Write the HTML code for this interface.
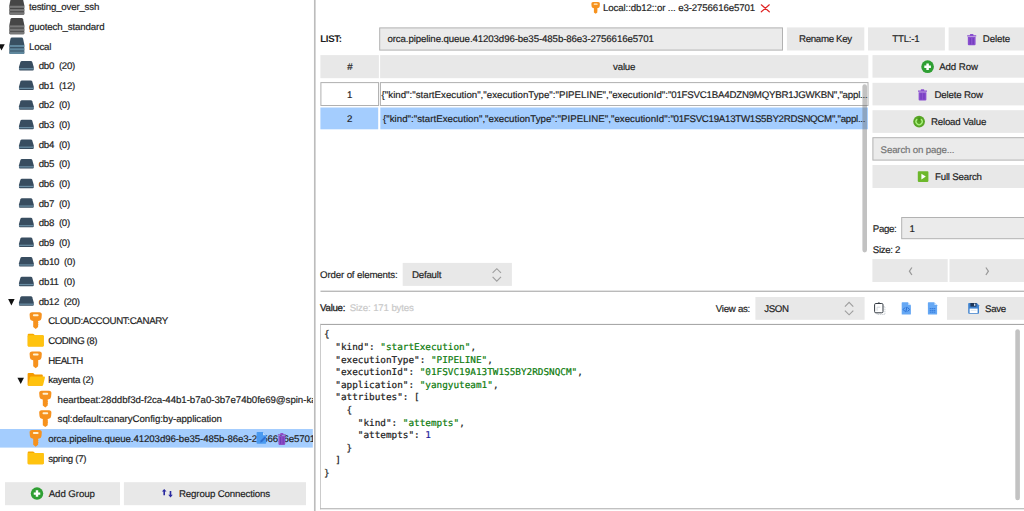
<!DOCTYPE html>
<html lang="en"><head><meta charset="utf-8"><title>Redis Desktop Manager</title><style>
*{box-sizing:border-box;margin:0;padding:0}
html,body{width:1024px;height:511px;overflow:hidden;background:#fff}
body{position:relative;font-family:"Liberation Sans",sans-serif;font-size:9.7px;color:#1e1e1e;line-height:12px;-webkit-text-stroke:0.18px #1e1e1e}
.t{position:absolute;white-space:pre;line-height:12px;height:12px;text-rendering:geometricPrecision}
svg{position:absolute;left:0;top:0;overflow:hidden}
.mono{text-rendering:geometricPrecision;font-family:"DejaVu Sans Mono","Liberation Mono",monospace;font-size:9.36px;line-height:12.6px;height:12.6px;position:absolute;white-space:pre;color:#1a1a1a;-webkit-text-stroke:0.2px #1a1a1a}
.g{color:#0b7a0b;-webkit-text-stroke-color:#0b7a0b}.n{color:#1a1a9a;-webkit-text-stroke-color:#1a1a9a}
#tree{position:absolute;left:0;top:0;width:312.8px;height:480px;overflow:hidden}
</style></head><body>
<svg width="1024" height="511" viewBox="0 0 1024 511">
<rect x="0.00" y="429.00" width="312.80" height="18.60" fill="#a4cdfe"/>
<g transform="translate(9.40 -1.65)"><path d="M2.6 0 H12.2 Q13.4 0 13.7 1.2 L14.9 7 V15.4 Q14.9 16.4 13.9 16.4 H1 Q0 16.4 0 15.4 V7 L1.1 1.2 Q1.4 0 2.6 0 Z" fill="#464646"/><rect x="0" y="7.4" width="14.9" height="2.1" fill="#787878"/><rect x="0" y="10.7" width="14.9" height="2.2" fill="#787878"/><path d="M0 13.8 H14.9 V15.4 Q14.9 16.4 13.9 16.4 H1 Q0 16.4 0 15.4 Z" fill="#787878"/></g>
<g transform="translate(9.40 17.97)"><path d="M2.6 0 H12.2 Q13.4 0 13.7 1.2 L14.9 7 V15.4 Q14.9 16.4 13.9 16.4 H1 Q0 16.4 0 15.4 V7 L1.1 1.2 Q1.4 0 2.6 0 Z" fill="#464646"/><rect x="0" y="7.4" width="14.9" height="2.1" fill="#787878"/><rect x="0" y="10.7" width="14.9" height="2.2" fill="#787878"/><path d="M0 13.8 H14.9 V15.4 Q14.9 16.4 13.9 16.4 H1 Q0 16.4 0 15.4 Z" fill="#787878"/></g>
<g transform="translate(9.40 37.59)"><path d="M2.6 0 H12.2 Q13.4 0 13.7 1.2 L14.9 7 V15.4 Q14.9 16.4 13.9 16.4 H1 Q0 16.4 0 15.4 V7 L1.1 1.2 Q1.4 0 2.6 0 Z" fill="#385062"/><rect x="0" y="7.4" width="14.9" height="2.1" fill="#5f879d"/><rect x="0" y="10.7" width="14.9" height="2.2" fill="#5f879d"/><path d="M0 13.8 H14.9 V15.4 Q14.9 16.4 13.9 16.4 H1 Q0 16.4 0 15.4 Z" fill="#5f879d"/></g>
<g transform="translate(-1.75 44.24)"><path d="M0 0 H6.5 L3.25 6.3 Z" fill="#111"/></g>
<g transform="translate(18.95 60.91)"><path d="M3 0 H11.8 Q13 0 13.3 1 L14.8 6.2 V8.5 Q14.8 9.5 13.8 9.5 H1 Q0 9.5 0 8.5 V6.2 L1.5 1 Q1.8 0 3 0 Z" fill="#384d60"/><rect x="0.1" y="7.2" width="14.6" height="1.25" fill="#6a8da3"/></g>
<g transform="translate(18.95 80.53)"><path d="M3 0 H11.8 Q13 0 13.3 1 L14.8 6.2 V8.5 Q14.8 9.5 13.8 9.5 H1 Q0 9.5 0 8.5 V6.2 L1.5 1 Q1.8 0 3 0 Z" fill="#384d60"/><rect x="0.1" y="7.2" width="14.6" height="1.25" fill="#6a8da3"/></g>
<g transform="translate(18.95 100.15)"><path d="M3 0 H11.8 Q13 0 13.3 1 L14.8 6.2 V8.5 Q14.8 9.5 13.8 9.5 H1 Q0 9.5 0 8.5 V6.2 L1.5 1 Q1.8 0 3 0 Z" fill="#384d60"/><rect x="0.1" y="7.2" width="14.6" height="1.25" fill="#6a8da3"/></g>
<g transform="translate(18.95 119.77)"><path d="M3 0 H11.8 Q13 0 13.3 1 L14.8 6.2 V8.5 Q14.8 9.5 13.8 9.5 H1 Q0 9.5 0 8.5 V6.2 L1.5 1 Q1.8 0 3 0 Z" fill="#384d60"/><rect x="0.1" y="7.2" width="14.6" height="1.25" fill="#6a8da3"/></g>
<g transform="translate(18.95 139.39)"><path d="M3 0 H11.8 Q13 0 13.3 1 L14.8 6.2 V8.5 Q14.8 9.5 13.8 9.5 H1 Q0 9.5 0 8.5 V6.2 L1.5 1 Q1.8 0 3 0 Z" fill="#384d60"/><rect x="0.1" y="7.2" width="14.6" height="1.25" fill="#6a8da3"/></g>
<g transform="translate(18.95 159.01)"><path d="M3 0 H11.8 Q13 0 13.3 1 L14.8 6.2 V8.5 Q14.8 9.5 13.8 9.5 H1 Q0 9.5 0 8.5 V6.2 L1.5 1 Q1.8 0 3 0 Z" fill="#384d60"/><rect x="0.1" y="7.2" width="14.6" height="1.25" fill="#6a8da3"/></g>
<g transform="translate(18.95 178.63)"><path d="M3 0 H11.8 Q13 0 13.3 1 L14.8 6.2 V8.5 Q14.8 9.5 13.8 9.5 H1 Q0 9.5 0 8.5 V6.2 L1.5 1 Q1.8 0 3 0 Z" fill="#384d60"/><rect x="0.1" y="7.2" width="14.6" height="1.25" fill="#6a8da3"/></g>
<g transform="translate(18.95 198.25)"><path d="M3 0 H11.8 Q13 0 13.3 1 L14.8 6.2 V8.5 Q14.8 9.5 13.8 9.5 H1 Q0 9.5 0 8.5 V6.2 L1.5 1 Q1.8 0 3 0 Z" fill="#384d60"/><rect x="0.1" y="7.2" width="14.6" height="1.25" fill="#6a8da3"/></g>
<g transform="translate(18.95 217.87)"><path d="M3 0 H11.8 Q13 0 13.3 1 L14.8 6.2 V8.5 Q14.8 9.5 13.8 9.5 H1 Q0 9.5 0 8.5 V6.2 L1.5 1 Q1.8 0 3 0 Z" fill="#384d60"/><rect x="0.1" y="7.2" width="14.6" height="1.25" fill="#6a8da3"/></g>
<g transform="translate(18.95 237.49)"><path d="M3 0 H11.8 Q13 0 13.3 1 L14.8 6.2 V8.5 Q14.8 9.5 13.8 9.5 H1 Q0 9.5 0 8.5 V6.2 L1.5 1 Q1.8 0 3 0 Z" fill="#384d60"/><rect x="0.1" y="7.2" width="14.6" height="1.25" fill="#6a8da3"/></g>
<g transform="translate(18.95 257.11)"><path d="M3 0 H11.8 Q13 0 13.3 1 L14.8 6.2 V8.5 Q14.8 9.5 13.8 9.5 H1 Q0 9.5 0 8.5 V6.2 L1.5 1 Q1.8 0 3 0 Z" fill="#384d60"/><rect x="0.1" y="7.2" width="14.6" height="1.25" fill="#6a8da3"/></g>
<g transform="translate(18.95 276.73)"><path d="M3 0 H11.8 Q13 0 13.3 1 L14.8 6.2 V8.5 Q14.8 9.5 13.8 9.5 H1 Q0 9.5 0 8.5 V6.2 L1.5 1 Q1.8 0 3 0 Z" fill="#384d60"/><rect x="0.1" y="7.2" width="14.6" height="1.25" fill="#6a8da3"/></g>
<g transform="translate(18.95 296.35)"><path d="M3 0 H11.8 Q13 0 13.3 1 L14.8 6.2 V8.5 Q14.8 9.5 13.8 9.5 H1 Q0 9.5 0 8.5 V6.2 L1.5 1 Q1.8 0 3 0 Z" fill="#384d60"/><rect x="0.1" y="7.2" width="14.6" height="1.25" fill="#6a8da3"/></g>
<g transform="translate(8.10 299.10)"><path d="M0 0 H6.5 L3.25 6.3 Z" fill="#111"/></g>
<g transform="translate(29.50 312.17)"><path d="M2.6 0 H9.8 Q12.5 0 12.3 2.6 L12 6 Q11.8 8.1 9.7 8.5 L8.6 8.8 V10.2 L9.1 10.7 L8.6 11.2 V12 L9.1 12.5 L8.6 13 V14.9 L6.2 16.8 L3.7 14.9 V8.8 L2.7 8.5 Q0.6 8.1 0.4 6 L0.1 2.6 Q-0.1 0 2.6 0 Z" fill="#f6921e"/><rect x="3.4" y="2.1" width="5.7" height="1.9" rx="0.95" fill="#fff1d2"/></g>
<g transform="translate(27.70 333.74)"><path d="M1 0 H5.2 Q6 0 6.5 0.7 L7.2 1.6 H15 Q16 1.6 16 2.6 V11.7 Q16 12.7 15 12.7 H1 Q0 12.7 0 11.7 V1 Q0 0 1 0 Z" fill="#f6a800"/><path d="M1 1.5 H15 Q16 1.5 16 2.5 V11.7 Q16 12.7 15 12.7 H1 Q0 12.7 0 11.7 V2.5 Q0 1.5 1 1.5 Z" fill="#ffc30f"/></g>
<g transform="translate(29.50 351.41)"><path d="M2.6 0 H9.8 Q12.5 0 12.3 2.6 L12 6 Q11.8 8.1 9.7 8.5 L8.6 8.8 V10.2 L9.1 10.7 L8.6 11.2 V12 L9.1 12.5 L8.6 13 V14.9 L6.2 16.8 L3.7 14.9 V8.8 L2.7 8.5 Q0.6 8.1 0.4 6 L0.1 2.6 Q-0.1 0 2.6 0 Z" fill="#f6921e"/><rect x="3.4" y="2.1" width="5.7" height="1.9" rx="0.95" fill="#fff1d2"/></g>
<g transform="translate(27.60 372.88)"><path d="M1 0 H5 Q5.8 0 6.3 0.7 L7 1.6 H14.2 Q15.2 1.6 15.2 2.6 V11.9 Q15.2 12.9 14.2 12.9 H1 Q0 12.9 0 11.9 V1 Q0 0 1 0 Z" fill="#f59b00"/><path d="M3.6 3.7 H16.4 Q17.6 3.7 17.3 4.9 L15.6 11.9 Q15.3 12.9 14.2 12.9 H1.2 Q0.2 12.9 0.5 11.9 L2.3 4.7 Q2.6 3.7 3.6 3.7 Z" fill="#ffc20e"/></g>
<g transform="translate(17.45 377.68)"><path d="M0 0 H6.5 L3.25 6.3 Z" fill="#111"/></g>
<g transform="translate(39.10 390.65)"><path d="M2.6 0 H9.8 Q12.5 0 12.3 2.6 L12 6 Q11.8 8.1 9.7 8.5 L8.6 8.8 V10.2 L9.1 10.7 L8.6 11.2 V12 L9.1 12.5 L8.6 13 V14.9 L6.2 16.8 L3.7 14.9 V8.8 L2.7 8.5 Q0.6 8.1 0.4 6 L0.1 2.6 Q-0.1 0 2.6 0 Z" fill="#f6921e"/><rect x="3.4" y="2.1" width="5.7" height="1.9" rx="0.95" fill="#fff1d2"/></g>
<g transform="translate(39.10 410.27)"><path d="M2.6 0 H9.8 Q12.5 0 12.3 2.6 L12 6 Q11.8 8.1 9.7 8.5 L8.6 8.8 V10.2 L9.1 10.7 L8.6 11.2 V12 L9.1 12.5 L8.6 13 V14.9 L6.2 16.8 L3.7 14.9 V8.8 L2.7 8.5 Q0.6 8.1 0.4 6 L0.1 2.6 Q-0.1 0 2.6 0 Z" fill="#f6921e"/><rect x="3.4" y="2.1" width="5.7" height="1.9" rx="0.95" fill="#fff1d2"/></g>
<g transform="translate(29.50 429.89)"><path d="M2.6 0 H9.8 Q12.5 0 12.3 2.6 L12 6 Q11.8 8.1 9.7 8.5 L8.6 8.8 V10.2 L9.1 10.7 L8.6 11.2 V12 L9.1 12.5 L8.6 13 V14.9 L6.2 16.8 L3.7 14.9 V8.8 L2.7 8.5 Q0.6 8.1 0.4 6 L0.1 2.6 Q-0.1 0 2.6 0 Z" fill="#f6921e"/><rect x="3.4" y="2.1" width="5.7" height="1.9" rx="0.95" fill="#fff1d2"/></g>
<g transform="translate(27.70 451.46)"><path d="M1 0 H5.2 Q6 0 6.5 0.7 L7.2 1.6 H15 Q16 1.6 16 2.6 V11.7 Q16 12.7 15 12.7 H1 Q0 12.7 0 11.7 V1 Q0 0 1 0 Z" fill="#f6a800"/><path d="M1 1.5 H15 Q16 1.5 16 2.5 V11.7 Q16 12.7 15 12.7 H1 Q0 12.7 0 11.7 V2.5 Q0 1.5 1 1.5 Z" fill="#ffc30f"/></g>
<rect x="5.00" y="482.20" width="115.00" height="23.00" fill="#e8e8e8"/>
<g transform="translate(37.00 493.60) scale(0.625)"><circle r="10" fill="#2f9f33"/><path d="M-5.2 0 H5.2 M0 -5.2 V5.2" stroke="#fff" stroke-width="3.9"/></g>
<rect x="123.90" y="482.20" width="182.10" height="23.00" fill="#e8e8e8"/>
<g transform="translate(161.90 488.90)"><path d="M2.3 0 L4.6 2.7 H3.1 V6.4 H1.5 V2.7 H0 Z" fill="#2a2aa0"/><path d="M8.6 8.6 L10.9 5.9 H9.4 V2.2 H7.8 V5.9 H6.3 Z" fill="#2a2aa0"/></g>
<rect x="313.95" y="0.00" width="1.65" height="511.00" fill="#bcbcbc"/>
<g transform="translate(591.30 2.00) scale(0.7)"><path d="M2.6 0 H9.8 Q12.5 0 12.3 2.6 L12 6 Q11.8 8.1 9.7 8.5 L8.6 8.8 V10.2 L9.1 10.7 L8.6 11.2 V12 L9.1 12.5 L8.6 13 V14.9 L6.2 16.8 L3.7 14.9 V8.8 L2.7 8.5 Q0.6 8.1 0.4 6 L0.1 2.6 Q-0.1 0 2.6 0 Z" fill="#f6921e"/><rect x="3.4" y="2.1" width="5.7" height="1.9" rx="0.95" fill="#fff1d2"/></g>
<g transform="translate(761.00 4.50)"><path d="M0.3 0.3 L8.3 7.3 M8.3 0.3 L0.3 7.3" stroke="#e02424" stroke-width="1.2" stroke-linecap="round"/></g>
<rect x="379.70" y="27.90" width="402.80" height="22.20" fill="#ebebeb" stroke="#b2b2b2" stroke-width="1.0"/>
<rect x="786.90" y="27.40" width="77.40" height="23.10" fill="#e8e8e8"/>
<rect x="868.00" y="27.40" width="76.90" height="23.10" fill="#e8e8e8"/>
<rect x="948.60" y="27.40" width="81.40" height="23.10" fill="#e8e8e8"/>
<g transform="translate(967.20 34.10)"><g transform="scale(1.047 0.982)"><path d="M0 1.2 H2.6 V0.5 Q2.6 0 3.1 0 H5.5 Q6 0 6 0.5 V1.2 H8.6 V2.4 H0 Z" fill="#8a4fd0"/><path d="M0.6 3 H8 V10.4 Q8 11.4 7 11.4 H1.6 Q0.6 11.4 0.6 10.4 Z" fill="#8a4fd0"/><path d="M2.9 4 V10.4 M5.7 4 V10.4" stroke="#6a38b4" stroke-width="0.9"/></g></g>
<rect x="320.40" y="55.10" width="58.50" height="23.10" fill="#e8e8e8"/>
<rect x="380.10" y="55.10" width="488.20" height="23.10" fill="#e8e8e8"/>
<rect x="872.50" y="55.10" width="157.50" height="22.60" fill="#e8e8e8"/>
<g transform="translate(927.60 66.70) scale(0.635)"><circle r="10" fill="#2f9f33"/><path d="M-5.2 0 H5.2 M0 -5.2 V5.2" stroke="#fff" stroke-width="3.9"/></g>
<rect x="320.90" y="82.60" width="57.65" height="22.90" fill="#fff" stroke="#b0b0b0" stroke-width="1.0"/>
<rect x="380.40" y="82.60" width="487.60" height="22.90" fill="#fff" stroke="#b0b0b0" stroke-width="1.0"/>
<rect x="320.40" y="107.50" width="57.80" height="21.80" fill="#a4cdfe"/>
<rect x="380.30" y="107.50" width="487.60" height="21.80" fill="#a4cdfe"/>
<rect x="872.50" y="82.80" width="157.50" height="22.60" fill="#e8e8e8"/>
<g transform="translate(918.00 89.30)"><g transform="scale(1.047 0.982)"><path d="M0 1.2 H2.6 V0.5 Q2.6 0 3.1 0 H5.5 Q6 0 6 0.5 V1.2 H8.6 V2.4 H0 Z" fill="#8a4fd0"/><path d="M0.6 3 H8 V10.4 Q8 11.4 7 11.4 H1.6 Q0.6 11.4 0.6 10.4 Z" fill="#8a4fd0"/><path d="M2.9 4 V10.4 M5.7 4 V10.4" stroke="#6a38b4" stroke-width="0.9"/></g></g>
<rect x="872.50" y="110.20" width="157.50" height="22.70" fill="#e8e8e8"/>
<g transform="translate(919.10 121.60)"><circle r="5.85" fill="#57a525"/><path d="M-2.3 -2.1 A3.1 3.1 0 1 0 2.3 -2.1" stroke="#a8f07c" stroke-width="1.35" fill="none" stroke-linecap="round"/><path d="M0 -3.6 V-0.8" stroke="#3f8f14" stroke-width="1.2" stroke-linecap="round"/></g>
<rect x="872.90" y="137.70" width="156.60" height="22.40" fill="#ebebeb" stroke="#b2b2b2" stroke-width="1.0"/>
<rect x="872.50" y="165.00" width="157.50" height="23.00" fill="#e8e8e8"/>
<g transform="translate(917.80 171.30)"><rect width="10.6" height="10.6" rx="0.8" fill="#6db82c"/><path d="M3.6 2.4 L8 5.3 L3.6 8.2 Z" fill="#fff"/></g>
<rect x="901.70" y="217.50" width="127.80" height="21.20" fill="#ebebeb" stroke="#b2b2b2" stroke-width="1.0"/>
<rect x="872.40" y="259.10" width="75.30" height="22.90" fill="#e8e8e8"/>
<rect x="949.50" y="259.10" width="80.50" height="22.90" fill="#e8e8e8"/>
<g transform="translate(908.70 267.20)"><path d="M3.2 0.3 L0.7 4 L3.2 7.8" stroke="#999" stroke-width="1.25" fill="none"/></g>
<g transform="translate(985.50 267.20)"><path d="M0.4 0.3 L2.9 4 L0.4 7.8" stroke="#999" stroke-width="1.25" fill="none"/></g>
<rect x="402.70" y="262.90" width="109.20" height="23.00" fill="#e8e8e8"/>
<g transform="translate(492.00 267.90)"><path d="M0.6 5 L4.8 0.8 L9 5 M0.6 9 L4.8 13.2 L9 9" stroke="#9e9e9e" stroke-width="1.15" fill="none"/></g>
<rect x="320.50" y="290.60" width="709.50" height="1.40" fill="#bababa"/>
<rect x="755.40" y="297.00" width="109.20" height="22.80" fill="#e8e8e8"/>
<g transform="translate(844.30 301.60)"><path d="M0.6 5 L4.8 0.8 L9 5 M0.6 9 L4.8 13.2 L9 9" stroke="#9e9e9e" stroke-width="1.15" fill="none"/></g>
<g transform="translate(874.10 302.20)"><path d="M9.4 4.4 H10.8 V12.3 H3 V11" stroke="#aab2ba" stroke-width="0.6" fill="none" stroke-dasharray="1.2 0.7"/><rect x="0.5" y="1.3" width="8.4" height="9.3" rx="1.2" fill="#fff" stroke="#333a42" stroke-width="1"/><path d="M3.4 1.2 Q4.7 -0.4 6 1.2" stroke="#333a42" stroke-width="0.8" fill="none"/><path d="M3 8.6 V5 H6.2" stroke="#c2c8ce" stroke-width="0.7" fill="none"/></g>
<g transform="translate(901.70 302.30)"><path d="M0.6 0 H6.2 L9.2 3 V11.7 Q9.2 12.3 8.6 12.3 H0.6 Q0 12.3 0 11.7 V0.6 Q0 0 0.6 0 Z" fill="#66a8f4"/><path d="M6.6 0.4 L8.8 2.6 H6.6 Z" fill="#d5e7fc"/><path d="M3.3 5.2 L1.5 7.2 L3.3 9.2 M6 5.2 L7.8 7.2 L6 9.2 M5.2 4.6 L4.1 9.8" stroke="#2a6fd4" stroke-width="1" fill="none"/></g>
<g transform="translate(927.90 302.30)"><path d="M0.6 0 H6.2 L9.2 3 V11.7 Q9.2 12.3 8.6 12.3 H0.6 Q0 12.3 0 11.7 V0.6 Q0 0 0.6 0 Z" fill="#66a8f4"/><path d="M6.6 0.4 L8.8 2.6 H6.6 Z" fill="#d5e7fc"/><path d="M1.8 6.2 H7.4 M1.8 8 H7.4 M1.8 9.8 H7.4" stroke="#3a80e0" stroke-width="1.2" fill="none" stroke-dasharray="1.6 0.4"/></g>
<rect x="947.00" y="297.00" width="83.00" height="22.80" fill="#e8e8e8"/>
<g transform="translate(968.20 303.00)"><path d="M0.8 0 H8.6 L10.8 2.2 V10 Q10.8 10.8 10 10.8 H0.8 Q0 10.8 0 10 V0.8 Q0 0 0.8 0 Z" fill="#3f82cf"/><rect x="2.2" y="0" width="6" height="3.6" fill="#1d3557"/><rect x="5.8" y="0.6" width="1.4" height="2.2" fill="#cfe0f5"/><rect x="1.4" y="5.6" width="8" height="4.4" fill="#fff"/><path d="M2.6 7.4 H8.2" stroke="#c9d6e6" stroke-width="0.6"/></g>
<rect x="320.10" y="323.90" width="709.90" height="185.40" fill="#fff"/>
<rect x="320.10" y="323.90" width="709.90" height="1.10" fill="#a8a8a8"/>
<rect x="320.10" y="323.90" width="0.85" height="185.40" fill="#c2c2c2"/>
<rect x="320.10" y="508.20" width="709.90" height="1.10" fill="#b2b2b2"/>
<rect x="1015.3" y="329.3" width="4.6" height="171" rx="2.3" fill="#c2c2c2"/>
</svg>
<div id="tree">
<div class="t" style="left:29.00px;top:2px;letter-spacing:-0.197px;">testing_over_ssh</div>
<div class="t" style="left:29.00px;top:22px;letter-spacing:-0.135px;">guotech_standard</div>
<div class="t" style="left:29.00px;top:42px;letter-spacing:-0.184px;">Local</div>
<div class="t" style="left:38.75px;top:61px;letter-spacing:-0.281px;">db0  (20)</div>
<div class="t" style="left:38.75px;top:81px;letter-spacing:-0.281px;">db1  (12)</div>
<div class="t" style="left:38.75px;top:100px;letter-spacing:-0.281px;">db2  (0)</div>
<div class="t" style="left:38.75px;top:120px;letter-spacing:-0.281px;">db3  (0)</div>
<div class="t" style="left:38.75px;top:140px;letter-spacing:-0.281px;">db4  (0)</div>
<div class="t" style="left:38.75px;top:159px;letter-spacing:-0.281px;">db5  (0)</div>
<div class="t" style="left:38.75px;top:179px;letter-spacing:-0.281px;">db6  (0)</div>
<div class="t" style="left:38.75px;top:199px;letter-spacing:-0.281px;">db7  (0)</div>
<div class="t" style="left:38.75px;top:218px;letter-spacing:-0.281px;">db8  (0)</div>
<div class="t" style="left:38.75px;top:238px;letter-spacing:-0.281px;">db9  (0)</div>
<div class="t" style="left:38.75px;top:257px;letter-spacing:-0.270px;">db10  (0)</div>
<div class="t" style="left:38.75px;top:277px;letter-spacing:-0.190px;">db11  (0)</div>
<div class="t" style="left:38.75px;top:297px;letter-spacing:-0.332px;">db12  (20)</div>
<div class="t" style="left:48.20px;top:316px;letter-spacing:-0.331px;">CLOUD:ACCOUNT:CANARY</div>
<div class="t" style="left:48.20px;top:336px;letter-spacing:-0.448px;">CODING (8)</div>
<div class="t" style="left:48.20px;top:356px;letter-spacing:-0.503px;">HEALTH</div>
<div class="t" style="left:48.20px;top:375px;letter-spacing:-0.288px;">kayenta (2)</div>
<div class="t" style="left:57.60px;top:395px;letter-spacing:-0.045px;">heartbeat:28ddbf3d-f2ca-44b1-b7a0-3b7e74b0fe69@spin-kayenta</div>
<div class="t" style="left:57.60px;top:414px;letter-spacing:-0.054px;">sql:default:canaryConfig:by-application</div>
<div class="t" style="left:48.20px;top:434px;letter-spacing:-0.100px;">orca.pipeline.queue.41203d96-be35-485b-86e3-2756616e5701</div>
<div class="t" style="left:48.20px;top:454px;letter-spacing:-0.287px;">spring (7)</div>
</div>
<div class="t" style="left:48.75px;top:489px;letter-spacing:-0.090px;">Add Group</div>
<div class="t" style="left:179.00px;top:489px;letter-spacing:-0.143px;">Regroup Connections</div>
<div class="t" style="left:603.00px;top:3px;letter-spacing:-0.120px;">Local::db12::or ... e3-2756616e5701</div>
<div class="t" style="left:320.30px;top:34px;letter-spacing:-0.348px;font-weight:bold;-webkit-text-stroke-width:0;">LIST:</div>
<div class="t" style="left:387.40px;top:34px;letter-spacing:-0.109px;">orca.pipeline.queue.41203d96-be35-485b-86e3-2756616e5701</div>
<div class="t" style="left:799.00px;top:34px;letter-spacing:-0.312px;">Rename Key</div>
<div class="t" style="left:892.30px;top:34px;letter-spacing:-0.239px;">TTL:-1</div>
<div class="t" style="left:982.80px;top:34px;letter-spacing:-0.136px;">Delete</div>
<div class="t" style="left:347.30px;top:62px;">#</div>
<div class="t" style="left:613.10px;top:62px;letter-spacing:-0.214px;">value</div>
<div class="t" style="left:939.20px;top:62px;letter-spacing:-0.088px;">Add Row</div>
<div class="t" style="left:347.10px;top:90px;">1</div>
<div class="t" style="left:381.60px;top:90px;letter-spacing:0.008px;">{"kind":"startExecution","executionType":"PIPELINE","executionId":</div>
<div class="t" style="left:668.00px;top:90px;letter-spacing:-0.212px;">"01FSVC1BA4DZN9MQYBR1JGWKBN","appl...</div>
<div class="t" style="left:347.10px;top:114px;">2</div>
<div class="t" style="left:383.00px;top:114px;letter-spacing:0.023px;">{"kind":"startExecution","executionType":"PIPELINE","executionId":</div>
<div class="t" style="left:670.40px;top:114px;letter-spacing:-0.267px;">"01FSVC19A13TW1S5BY2RDSNQCM","appl...</div>
<div class="t" style="left:934.50px;top:90px;letter-spacing:-0.168px;">Delete Row</div>
<div class="t" style="left:930.90px;top:117px;letter-spacing:-0.179px;">Reload Value</div>
<div class="t" style="left:880.60px;top:145px;letter-spacing:-0.158px;color:#747474;-webkit-text-stroke-color:#747474;">Search on page...</div>
<div class="t" style="left:935.00px;top:172px;letter-spacing:-0.200px;">Full Search</div>
<div class="t" style="left:872.80px;top:224px;letter-spacing:-0.366px;">Page:</div>
<div class="t" style="left:909.40px;top:224px;">1</div>
<div class="t" style="left:872.80px;top:245px;letter-spacing:-0.318px;">Size: 2</div>
<div class="t" style="left:320.10px;top:270px;letter-spacing:-0.152px;">Order of elements:</div>
<div class="t" style="left:412.00px;top:270px;letter-spacing:-0.229px;">Default</div>
<div class="t" style="left:320.10px;top:303px;letter-spacing:-0.292px;-webkit-text-stroke-width:0.28px;">Value:</div>
<div class="t" style="left:349.80px;top:303px;letter-spacing:-0.150px;color:#c9c9c9;-webkit-text-stroke-color:#c9c9c9;">Size: 171 bytes</div>
<div class="t" style="left:715.80px;top:304px;letter-spacing:-0.280px;">View as:</div>
<div class="t" style="left:764.20px;top:304px;letter-spacing:-0.361px;">JSON</div>
<div class="t" style="left:985.10px;top:304px;letter-spacing:-0.323px;">Save</div>
<div class="mono" style="left:324.1px;top:329px">{</div>
<div class="mono" style="left:324.1px;top:342px">  "kind": <span class="g">"startExecution"</span>,</div>
<div class="mono" style="left:324.1px;top:355px">  "executionType": <span class="g">"PIPELINE"</span>,</div>
<div class="mono" style="left:324.1px;top:367px">  "executionId": <span class="g">"01FSVC19A13TW1S5BY2RDSNQCM"</span>,</div>
<div class="mono" style="left:324.1px;top:380px">  "application": <span class="g">"yangyuteam1"</span>,</div>
<div class="mono" style="left:324.1px;top:392px">  "attributes": [</div>
<div class="mono" style="left:324.1px;top:405px">    {</div>
<div class="mono" style="left:324.1px;top:418px">      "kind": <span class="g">"attempts"</span>,</div>
<div class="mono" style="left:324.1px;top:430px">      "attempts": <span class="n">1</span></div>
<div class="mono" style="left:324.1px;top:443px">    }</div>
<div class="mono" style="left:324.1px;top:455px">  ]</div>
<div class="mono" style="left:324.1px;top:468px">}</div>
<svg width="1024" height="511" viewBox="0 0 1024 511">
<g transform="translate(256.60 432.00)"><path d="M0.8 0 H6.4 L9.6 3.2 V11 Q9.6 11.8 8.8 11.8 H0.8 Q0 11.8 0 11 V0.8 Q0 0 0.8 0 Z" fill="#4a9af0"/><path d="M6.4 0 L9.6 3.2 H6.4 Z" fill="#b9d8fb"/><path d="M3.6 10.4 L4 8.6 L8.2 4.4 L9.6 5.8 L5.4 10 Z" fill="#2f6fd0"/></g>
<g transform="translate(277.90 432.90)"><g transform="scale(0.919 1.053)"><path d="M0 1.2 H2.6 V0.5 Q2.6 0 3.1 0 H5.5 Q6 0 6 0.5 V1.2 H8.6 V2.4 H0 Z" fill="#8e4ec6"/><path d="M0.6 3 H8 V10.4 Q8 11.4 7 11.4 H1.6 Q0.6 11.4 0.6 10.4 Z" fill="#8e4ec6"/><path d="M2.9 4 V10.4 M5.7 4 V10.4" stroke="#6a38b4" stroke-width="0.9"/></g></g>
<rect x="862.4" y="84.2" width="4.6" height="168.2" rx="2.3" fill="rgba(110,110,110,0.42)"/>
</svg>
</body></html>
